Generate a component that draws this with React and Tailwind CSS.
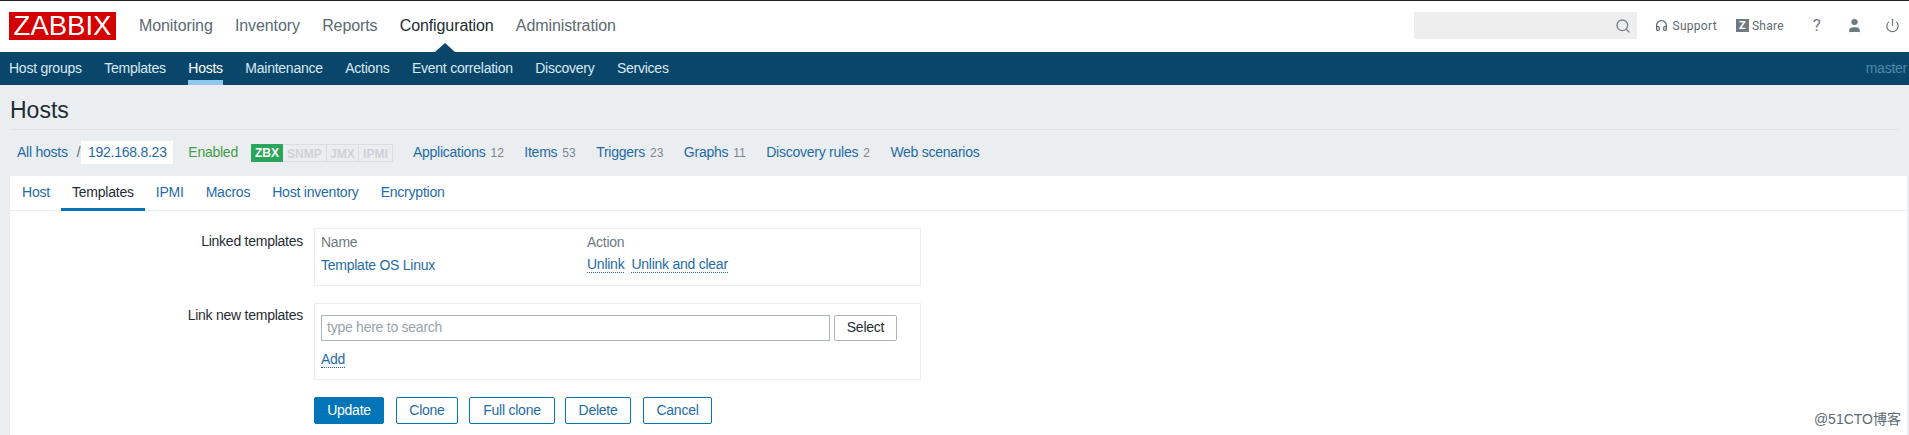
import React from "react";
import { Search, Headphones, User, Power } from "lucide-react";

const F = "font-['Liberation_Sans',Arial,sans-serif]";

function Count({ label, n }) {
  return (
    <span className="flex items-baseline">
      <a className="text-[#1f6ba6]">{label}</a>
      {n && <span className="ml-[5px] text-[12px] tracking-normal text-[#7a8791]">{n}</span>}
    </span>
  );
}

function Dotted({ children }) {
  return <a className="text-[#1f6ba6] border-b border-dotted border-[#1f6ba6] leading-[15px] inline-block">{children}</a>;
}

function Btn({ children, w, primary }) {
  return (
    <button
      className={
        "h-[27px] rounded-[2px] border border-[#0275b8] text-[14px] " +
        (primary ? "bg-[#0275b8] text-white" : "bg-white text-[#1f6ba6]")
      }
      style={{ width: w }}
    >
      {children}
    </button>
  );
}

export default function App() {
  return (
    <div className={F + " w-[1909px] h-[435px] overflow-hidden bg-[#ebeef0] text-[14px] tracking-[-0.25px] text-[#1f2c33] flex flex-col"}>
      <header className="h-[52px] shrink-0 bg-white border-t border-[#222222] flex items-start relative">
        <div className="ml-[9px] mt-[11px] w-[107px] h-[28px] bg-[#d40000] text-white text-[27.5px] tracking-normal leading-[28px] flex items-center justify-center">
          ZABBIX
        </div>
        <nav className="ml-[23px] mt-[15px] flex gap-[22.25px] text-[16px] tracking-[-0.1px] leading-[20px] text-[#5c6a73]">
          <a>Monitoring</a>
          <a>Inventory</a>
          <a>Reports</a>
          <a className="text-[#1f2c33] relative">
            Configuration
            <span className="absolute left-[35px] top-[27px] w-0 h-0 border-x-[10px] border-x-transparent border-b-[9px] border-b-[#0a466a]" />
          </a>
          <a>Administration</a>
        </nav>
        <div className="ml-auto mt-[11px] flex items-start">
          <div className="w-[223px] h-[27px] bg-[#eeeeee] flex items-center justify-end pr-[6px] mr-[18px]">
            <Search size={16} strokeWidth={2} className="text-[#76828a]" />
          </div>
          <div className="flex items-center h-[27px] text-[12px] text-[#5c6a73] font-['Roboto',sans-serif] tracking-[0.3px]">
            <Headphones size={13} strokeWidth={2.4} className="text-[#5c6a73] mr-[4px]" />
            <span>Support</span>
            <span className="ml-[19px] w-[13px] h-[13px] bg-[#6f7a82] text-white text-[11px] font-bold leading-[13px] text-center">Z</span>
            <span className="ml-[3px]">Share</span>
            <span className="ml-[27px] text-[17px] text-[#6f7a82] w-[12px] text-center">?</span>
            <User size={17} fill="#6f7a82" strokeWidth={1} className="ml-[23px] text-[#6f7a82]" />
            <Power size={15} strokeWidth={2} className="ml-[22px] mr-[9px] text-[#6f7a82]" />
          </div>
        </div>
      </header>

      <div className="h-[33px] shrink-0 bg-[#0a466a] flex items-start text-[#d9e9f3] pl-[9px] pr-[2px]">
        <nav className="flex gap-[22.5px] leading-[33px]">
          <a>Host groups</a>
          <a>Templates</a>
          <a className="h-[33px] text-white border-b-[5px] border-[#8ec8ee]">Hosts</a>
          <a>Maintenance</a>
          <a>Actions</a>
          <a>Event correlation</a>
          <a>Discovery</a>
          <a>Services</a>
        </nav>
        <span className="ml-auto leading-[33px] text-[#4f8aa8]">master</span>
      </div>

      <div className="h-[45px] shrink-0 mx-[10px] border-b border-[#dfe4e7] flex items-center pt-[6px]">
        <h1 className="text-[23px] tracking-normal leading-[28px] font-normal text-[#1f2c33]">Hosts</h1>
      </div>

      <div className="h-[46px] shrink-0 flex items-center pl-[17px] pb-[1px]">
        <a className="text-[#1f6ba6]">All hosts</a>
        <span className="ml-[9px] text-[#5c6a73]">/</span>
        <span className="ml-[1px] w-[92px] h-[23px] bg-white text-[#1f6ba6] flex items-center justify-center">192.168.8.23</span>
        <span className="ml-[15px] text-[#429e47]">Enabled</span>
        <div className="ml-[13px] flex h-[18px] text-[12px] tracking-normal font-bold leading-[18px] text-center text-[#ccd3d8]">
          <span className="w-[32px] bg-[#2aa55a] text-white">ZBX</span>
          <span className="w-[44px] border-y border-r border-[#d9dee1]">SNMP</span>
          <span className="w-[32px] border-y border-r border-[#d9dee1]">JMX</span>
          <span className="w-[34px] border-y border-r border-[#d9dee1]">IPMI</span>
        </div>
        <div className="ml-[20px] flex gap-[20.5px]">
          <Count label="Applications" n="12" />
          <Count label="Items" n="53" />
          <Count label="Triggers" n="23" />
          <Count label="Graphs" n="11" />
          <Count label="Discovery rules" n="2" />
          <Count label="Web scenarios" />
        </div>
      </div>

      <main className="ml-[10px] mr-[2px] flex-1 bg-white flex flex-col min-h-0">
        <div className="h-[35px] shrink-0 border-b border-[#ebeef0] flex pl-[1px] tracking-[-0.22px] text-[#1f6ba6]">
          <a className="h-[35px] px-[11px] leading-[32px]">Host</a>
          <a className="h-[35px] px-[11px] leading-[32px] text-[#1f2c33] border-b-[3px] border-[#0275b8]">Templates</a>
          <a className="h-[35px] px-[11px] leading-[32px]">IPMI</a>
          <a className="h-[35px] px-[11px] leading-[32px]">Macros</a>
          <a className="h-[35px] px-[11px] leading-[32px]">Host inventory</a>
          <a className="h-[35px] px-[11px] leading-[32px]">Encryption</a>
        </div>

        <div className="pt-[17px] flex flex-col relative flex-1">
          <div className="flex">
            <label className="w-[293px] text-right leading-[16px] pt-[5px] text-[#1f2c33]">Linked templates</label>
            <div className="ml-[11px] w-[607px] h-[58px] border border-[#ebeef0] pl-[6px] pt-[5px]">
              <div className="flex h-[16px] leading-[16px] text-[#6f7a82]">
                <span className="w-[266px]">Name</span>
                <span>Action</span>
              </div>
              <div className="flex mt-[7px] leading-[16px]">
                <a className="w-[266px] text-[#1f6ba6]">Template OS Linux</a>
                <div className="flex gap-[7px]">
                  <Dotted>Unlink</Dotted>
                  <Dotted>Unlink and clear</Dotted>
                </div>
              </div>
            </div>
          </div>

          <div className="flex mt-[17px]">
            <label className="w-[293px] text-right leading-[16px] pt-[4px] text-[#1f2c33]">Link new templates</label>
            <div className="ml-[11px] w-[607px] h-[77px] border border-[#ebeef0] pl-[6px] pt-[11px]">
              <div className="flex gap-[4px]">
                <div className="w-[509px] h-[26px] border border-[#acb4b9] text-[#9aa3a9] pl-[5px] leading-[22px]">type here to search</div>
                <div className="w-[63px] h-[26px] rounded-[2px] border border-[#acb4b9] text-center text-[#1f2c33] leading-[22px]">Select</div>
              </div>
              <div className="mt-[8px]"><Dotted>Add</Dotted></div>
            </div>
          </div>

          <div className="flex mt-[17px] ml-[304px]">
            <Btn w={70} primary>Update</Btn>
            <div className="w-[12px]" />
            <Btn w={62}>Clone</Btn>
            <div className="w-[11px]" />
            <Btn w={86}>Full clone</Btn>
            <div className="w-[10px]" />
            <Btn w={66}>Delete</Btn>
            <div className="w-[12px]" />
            <Btn w={69}>Cancel</Btn>
          </div>

          <span className="absolute right-[6px] bottom-[8px] text-[14px] tracking-normal leading-[16px] text-[#5c6a73] font-['Liberation_Sans','Noto_Sans_CJK_SC',sans-serif]">@51CTO博客</span>
        </div>
      </main>
    </div>
  );
}
